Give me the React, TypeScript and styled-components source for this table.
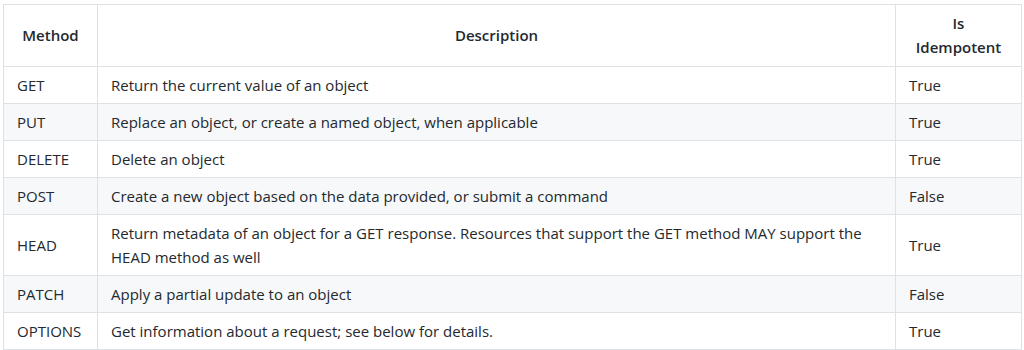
import React from "react";
import styled, { createGlobalStyle } from "styled-components";

const GlobalStyle = createGlobalStyle`
  html, body { margin: 0; padding: 0; background: #ffffff; }
  body { font-family: "Open Sans", "Noto Sans", Arial, sans-serif; }
`;

const Page = styled.div`
  padding: 4px 3px 0 3px;
`;

const Table = styled.table`
  width: 1018px;
  border-collapse: collapse;
  table-layout: fixed;
  font-size: 15px;
  line-height: 24px;
  color: #24292e;
`;

const HeadCell = styled.th`
  border: 1px solid #dfe2e5;
  padding: 6px 13px 7px 13px;
  font-weight: 600;
  text-align: center;
  background: #ffffff;
`;

const Row = styled.tr<{ $alt: boolean }>`
  background: ${(p) => (p.$alt ? "#f6f8fa" : "#ffffff")};
`;

const Cell = styled.td`
  border: 1px solid #dfe2e5;
  padding: 6px 13px;
  text-align: left;
  vertical-align: middle;
`;

const rows: [string, string, string][] = [
  ["GET", "Return the current value of an object", "True"],
  ["PUT", "Replace an object, or create a named object, when applicable", "True"],
  ["DELETE", "Delete an object", "True"],
  ["POST", "Create a new object based on the data provided, or submit a command", "False"],
  [
    "HEAD",
    "Return metadata of an object for a GET response. Resources that support the GET method MAY support the HEAD method as well",
    "True",
  ],
  ["PATCH", "Apply a partial update to an object", "False"],
  ["OPTIONS", "Get information about a request; see below for details.", "True"],
];

export default function App() {
  return (
    <Page>
      <GlobalStyle />
      <Table>
        <colgroup>
          <col style={{ width: 94 }} />
          <col style={{ width: 798 }} />
          <col style={{ width: 126 }} />
        </colgroup>
        <thead>
          <tr>
            <HeadCell>Method</HeadCell>
            <HeadCell>Description</HeadCell>
            <HeadCell>Is Idempotent</HeadCell>
          </tr>
        </thead>
        <tbody>
          {rows.map(([m, d, i], idx) => (
            <Row key={m} $alt={idx % 2 === 1}>
              <Cell>{m}</Cell>
              <Cell>{d}</Cell>
              <Cell>{i}</Cell>
            </Row>
          ))}
        </tbody>
      </Table>
    </Page>
  );
}
